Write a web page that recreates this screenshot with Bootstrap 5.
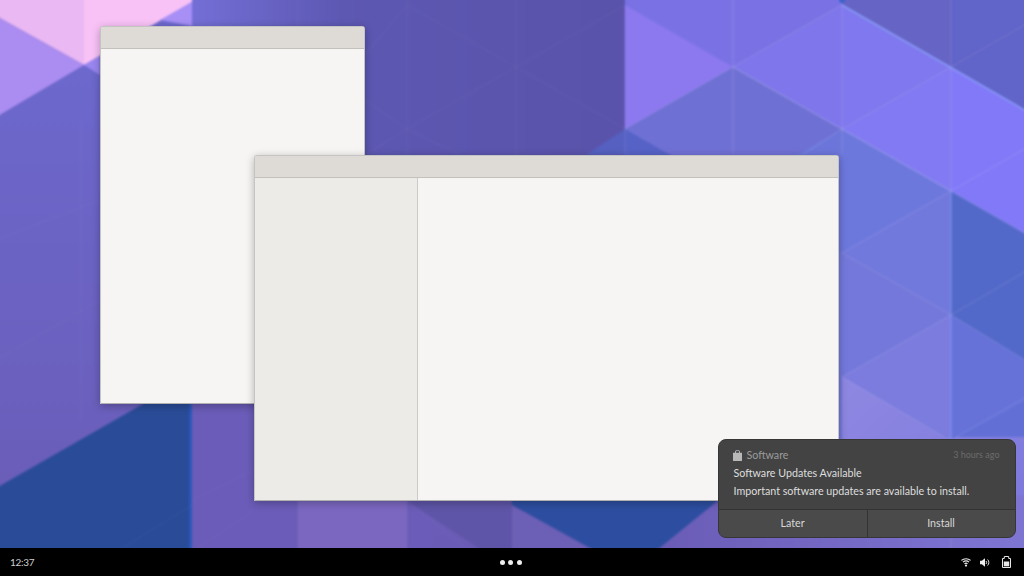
<!DOCTYPE html>
<html lang="en">
<head>
<meta charset="utf-8">
<title>Desktop</title>
<link href="https://cdn.jsdelivr.net/npm/bootstrap@5.3.0/dist/css/bootstrap.min.css" rel="stylesheet">
<style>
html,body{height:576px;overflow:hidden;background:#000}
body{font-family:"Lato","Noto Sans",sans-serif}
.desk-screen{width:1024px;height:576px}
.desk-area{height:548px;overflow:hidden}
.wall{left:-4px;top:-4px;width:1032px;height:556px;filter:blur(.8px)}
.win{background:#f6f5f3;border:1px solid rgba(0,0,0,.2);border-bottom-color:rgba(0,0,0,.28);border-radius:3px 3px 0 0;box-shadow:0 2px 9px rgba(0,0,0,.28)}
.win-a{left:100px;top:25.5px;width:265px;height:378px}
.win-b{left:254px;top:154.5px;width:585px;height:346px}
.win-title{height:22px;background:#dedbd6;border-bottom:1px solid #c4c1bc;border-radius:2px 2px 0 0}
.win-side{width:163px;background:#edebe8;border-right:1px solid #cdcbc7}
.note{left:717.5px;top:438.5px;width:298px;height:99.5px;background:#434343;border:1px solid #363636;border-radius:8px;color:#dedede;font-size:10.7px}
.note-body{padding:7px 15px 0 14px;height:69px}
.note-app{height:17px;color:#9c9c9c;gap:5px}
.note-time{color:#6c6c6c;font-size:9px}
.note-line{height:18px;line-height:18.500px;padding-left:1px}
.note-acts{height:29px;border-top:1px solid #333}
.note-btn{background:#4a4a4a;color:#d8d8d8;font-size:10.7px;border:0;border-radius:0;padding:0 0 2px;line-height:26px}
.note-btn+.note-btn{border-left:1px solid #333}
.note-btn:first-child{border-bottom-left-radius:7px}
.note-btn:last-child{border-bottom-right-radius:7px}
.shell{height:28px;background:#000;color:#cfcfcf;font-size:10px;letter-spacing:-.3px;padding:0 13px 0 10px}
.shell-side{width:160px}
.dot-i{width:5px;height:5px;background:#eee;border-radius:50%}
.dots{gap:3.5px}
.tray-a{gap:9px}
.tray{gap:12px}
</style>
</head>
<body>
<div class="desk-screen d-flex flex-column">
  <main class="desk-area position-relative">
    <svg class="wall position-absolute" viewBox="-4 -4 1032 556" aria-hidden="true">
      <defs>
        <linearGradient id="g1" x1="0" y1="0" x2="0" y2="1"><stop offset="0" stop-color="#6d6ad0"/><stop offset="1" stop-color="#6a5cb6"/></linearGradient>
        <linearGradient id="g2" x1="0" y1="0" x2="1" y2="0"><stop offset="0" stop-color="#736fd6"/><stop offset=".35" stop-color="#5d58b2"/><stop offset="1" stop-color="#5a53ab"/></linearGradient>
        <linearGradient id="g3" x1="0" y1="0" x2="1" y2="1"><stop offset="0" stop-color="#8f88e2"/><stop offset="1" stop-color="#7b78dc"/></linearGradient>
        <linearGradient id="g4" x1="0" y1="0" x2="1" y2="0"><stop offset="0" stop-color="#6a5cb6"/><stop offset="1" stop-color="#7f76d4"/></linearGradient>
      </defs>
      <rect x="-4" y="-4" width="1032" height="556" fill="url(#g1)"/>
      <polygon points="190,-4 625,-4 625,160 190,160" fill="url(#g2)"/>
      <polygon points="-4,-4 86,-4 84,65 -4,16" fill="#eab8f2"/>
      <polygon points="84,-4 192,-4 192,2 84,65" fill="#f8c2f6"/>
      <polygon points="160,20 192,2 192,26" fill="#a78ff6"/>
      <polygon points="-4,16 84,65 -4,117" fill="#ab8cf0"/>
      <polygon points="84,65 100,56 100,75" fill="#9a86f0"/>
      <polygon points="625,-4 1028,-4 1028,552 625,552" fill="#7278dc"/>
      <polygon points="625,-4 842,-4 842,5 733,67 625,5" fill="#7a72e4"/>
      <polygon points="625,5 733,67 625,129" fill="#8c78ef"/>
      <polygon points="733,67 842,5 842,129" fill="#7e76ea"/>
      <polygon points="842,-4 1028,-4 1028,112 842,5" fill="#6664c4"/>
      <polygon points="951,-4 1028,-4 1028,112 951,67" fill="#6164c8"/>
      <polygon points="842,5 951,67 842,129" fill="#7f78ee"/>
      <polygon points="842,129 951,67 951,191" fill="#827af2"/>
      <polygon points="951,67 1028,112 1028,235 951,191" fill="#8279f8"/>
      <polygon points="625,129 733,67 842,129 733,191" fill="#6f70d4"/>
      <polygon points="625,129 733,191 625,253" fill="#5662c6"/>
      <polygon points="625,129 586,155 625,155" fill="#5560c0"/>
      <polygon points="733,191 842,129 842,253" fill="#6c76da"/>
      <polygon points="842,129 951,191 842,253" fill="#6d78dd"/>
      <polygon points="842,253 951,191 951,315" fill="#7279dc"/>
      <polygon points="951,191 1028,235 1028,362 951,315" fill="#5369c9"/>
      <polygon points="951,315 1028,362 1028,440 951,440" fill="#6270d6"/>
      <polygon points="842,253 951,315 842,377" fill="#7478da"/>
      <polygon points="842,377 951,315 951,439" fill="#7c7cde"/>
      <polygon points="842,377 945,437 1028,437 1028,552 842,552" fill="url(#g3)"/>
      <polygon points="951,315 1028,362 1028,400 951,440" fill="#6672d8"/>
      <polygon points="-30,503 190,377 190,552 -30,552" fill="#2a4c98"/>
      <rect x="189" y="378" width="3" height="174" fill="#2a58bc"/>
      <rect x="192" y="400" width="240" height="152" fill="#6a5cb8"/>
      <rect x="298" y="495" width="109" height="57" fill="#7b67c0"/>
      <polygon points="407,501 512,501 512,552 484,552" fill="#5f55a8"/>
      <rect x="512" y="495" width="240" height="57" fill="#6c5fb6"/>
      <polygon points="512,505 512,495 725,495 655,552 597,552" fill="#2d4ea0"/>
      <polygon points="655,552 725,495 1028,495 1028,552" fill="url(#g4)"/>
      <g stroke="#fff" fill="none">
        <g stroke-opacity=".04" stroke-width="1">
          <path d="M298,-4V160M407,-4V160M516,-4V160M81,120V420M407,500V552M298,500V552"/>
          <path d="M365,55L407,5L516,67L407,129M365,100L407,129M407,129L365,155M516,67L625,5M516,67L625,129M407,129L460,155"/>
          <path d="M-4,240L100,200M-4,360L100,300M192,500L254,470M192,552L254,510M116,552L192,505M407,501L470,552"/>
        </g>
        <g stroke-opacity=".13" stroke-width="1">
          <path d="M733,-4V155M842,-4V155M951,-4V552"/>
          <path d="M733,67L842,5M625,129L733,67M842,129L951,67L1028,23M842,129L802,155M951,191L1028,147M842,129L951,191M842,253L951,191M842,253L951,315M842,377L951,315L1028,270M951,315L1028,362M842,377L945,437M951,440L1028,396M733,67L842,129"/>
        </g>
      </g>
      <path d="M842,5L1028,112" stroke="#8ea6ff" stroke-opacity=".8" stroke-width="1.5"/>
      <path d="M733,67L1028,235" stroke="#c0c0ff" stroke-opacity=".3" stroke-width="1"/>
      <path d="M625,5V155" stroke="#b4a8ff" stroke-opacity=".2"/>
      <path d="M951,191V440" stroke="#7a9aff" stroke-opacity=".4" stroke-width="1.5"/>
      <circle cx="842" cy="0" r="3" fill="#3c62cc"/>
    </svg>

    <section class="win win-a position-absolute d-flex flex-column">
      <div class="win-title flex-shrink-0"></div>
      <div class="flex-grow-1"></div>
    </section>

    <section class="win win-b position-absolute d-flex flex-column">
      <div class="win-title flex-shrink-0"></div>
      <div class="d-flex flex-grow-1">
        <div class="win-side flex-shrink-0"></div>
        <div class="flex-grow-1"></div>
      </div>
    </section>

    <aside class="note position-absolute d-flex flex-column overflow-hidden">
      <div class="note-body flex-shrink-0">
        <div class="note-app d-flex align-items-center">
          <svg width="9" height="11" viewBox="0 0 9 11"><path fill="#b8b8b8" d="M0 2.8h2V2a2.5 2 0 0 1 5 0v.8h2v7.6a.6.6 0 0 1-.6.6H.6a.6.6 0 0 1-.6-.6zM3 2.8h3V2a1.5 1.2 0 0 0-3 0z"/></svg>
          <span class="flex-grow-1">Software</span>
          <span class="note-time">3 hours ago</span>
        </div>
        <div class="note-line">Software Updates Available</div>
        <div class="note-line">Important software updates are available to install.</div>
      </div>
      <div class="note-acts d-flex flex-grow-1">
        <button type="button" class="btn note-btn w-50">Later</button>
        <button type="button" class="btn note-btn w-50">Install</button>
      </div>
    </aside>
  </main>

  <footer class="shell d-flex align-items-center justify-content-between flex-shrink-0">
    <div class="shell-side">12:37</div>
    <div class="d-flex dots">
      <span class="dot-i"></span><span class="dot-i"></span><span class="dot-i"></span>
    </div>
    <div class="shell-side d-flex justify-content-end align-items-center tray">
      <div class="d-flex align-items-center tray-a">
        <svg width="10" height="9" viewBox="0 0 10 9"><path fill="none" stroke="#e8e8e8" stroke-width="1.200" d="M.4 2.400C3 .2 7 .2 9.600 2.400M2 4.100c1.800-1.400 4.200-1.400 6 0M3.500 5.700c.9-.6 2.100-.6 3 0"/><circle cx="5" cy="7.600" r="1.100" fill="#e8e8e8"/></svg>
        <svg width="10" height="9" viewBox="0 0 10 9"><path fill="#eee" d="M0 2.800h1.800L5 .2v8.600L1.800 6.200H0z"/><path fill="none" stroke="#e4e4e4" stroke-width="1" d="M6 3a2.200 2.200 0 0 1 0 3M7.600 1.500a4.200 4.200 0 0 1 0 6"/></svg>
      </div>
      <svg width="9" height="12" viewBox="0 0 9 12"><path fill="none" stroke="#e8e8e8" stroke-width="1" d="M.5 2.500h1.800V.5h4.400v2h1.800v9H.5z"/><rect x="1.800" y="5.500" width="5.400" height="4.800" fill="#e8e8e8"/></svg>
    </div>
  </footer>
</div>
<script src="https://cdn.jsdelivr.net/npm/bootstrap@5.3.0/dist/js/bootstrap.bundle.min.js"></script>
</body>
</html>
